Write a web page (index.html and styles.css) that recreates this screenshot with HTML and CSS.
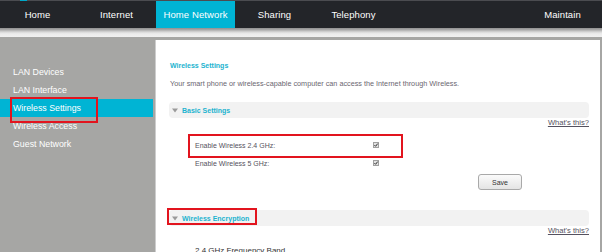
FILE: index.html
```html
<!DOCTYPE html>
<html>
<head>
<meta charset="utf-8">
<link rel="stylesheet" href="styles.css">
</head>
<body>
<div class="topline"><span class="logo-tip"></span></div>
<nav class="nav">
  <a class="tab">Home</a>
  <a class="tab">Internet</a>
  <a class="tab active">Home Network</a>
  <a class="tab">Sharing</a>
  <a class="tab">Telephony</a>
  <a class="tab right">Maintain</a>
</nav>
<div class="strip"></div>
<div class="main">
  <aside class="sidebar">
    <div class="side-item">LAN Devices</div>
    <div class="side-item">LAN Interface</div>
    <div class="side-item active"><span class="mark-side">Wireless Settings</span></div>
    <div class="side-item">Wireless Access</div>
    <div class="side-item">Guest Network</div>
  </aside>
  <section class="panel">
    <h1 class="title">Wireless Settings</h1>
    <p class="desc">Your smart phone or wireless-capable computer can access the Internet through Wireless.</p>
    <div class="bar">
      <svg class="tri" width="6" height="5" viewBox="0 0 6 5"><polygon points="0,0.5 6,0.5 3,4.5" fill="#9a9a9a"/></svg>
      <span class="bar-label">Basic Settings</span>
    </div>
    <div class="whats"><a>What's this?</a></div>
    <div class="row marked">
      <span class="row-label">Enable Wireless 2.4 GHz:</span>
      <svg class="chk" width="6" height="6" viewBox="0 0 6 6"><rect x="0.5" y="0.5" width="5" height="5" fill="#e2e2e2" stroke="#a0a0a0"/><path d="M1.4 3.1 L2.6 4.3 L4.7 1.6" fill="none" stroke="#333" stroke-width="1"/></svg>
    </div>
    <div class="row">
      <span class="row-label">Enable Wireless 5 GHz:</span>
      <svg class="chk" width="6" height="6" viewBox="0 0 6 6"><rect x="0.5" y="0.5" width="5" height="5" fill="#e2e2e2" stroke="#a0a0a0"/><path d="M1.4 3.1 L2.6 4.3 L4.7 1.6" fill="none" stroke="#333" stroke-width="1"/></svg>
    </div>
    <div class="btn-row"><button class="save">Save</button></div>
    <div class="bar bar-enc">
      <span class="mark-enc"></span>
      <svg class="tri" width="6" height="5" viewBox="0 0 6 5"><polygon points="0,0.5 6,0.5 3,4.5" fill="#9a9a9a"/></svg>
      <span class="bar-label">Wireless Encryption</span>
    </div>
    <div class="whats"><a>What's this?</a></div>
    <div class="band">2.4 GHz Frequency Band</div>
  </section>
</div>
</body>
</html>
```
FILE: styles.css
```css
* { box-sizing: border-box; }
html, body { margin: 0; padding: 0; }
body {
  width: 602px;
  height: 252px;
  overflow: hidden;
  background: #a6a6a4;
  font-family: "Liberation Sans", Arial, sans-serif;
}
.topline {
  height: 1px;
  background: #4b4c50;
  display: flex;
}
.logo-tip {
  margin-left: 20px;
  width: 7px;
  height: 1px;
  background: #00a8c8;
}
.nav {
  height: 27px;
  background: #232529;
  display: flex;
  margin-left: -2px;
}
.tab {
  width: 79px;
  display: flex;
  align-items: center;
  justify-content: center;
  color: #fff;
  font-size: 9.5px;
  letter-spacing: 0.1px;
  padding-bottom: 1px;
}
.tab.active { background: #00b4d4; }
.tab.right { margin-left: auto; }
.strip {
  height: 9px;
  background: linear-gradient(#8f8f8f 0%, #a9a9a9 20%, #d9d9d9 45%, #ececec 65%, #f0f0f0 100%);
}
.main {
  display: flex;
  height: 215px;
}
.sidebar {
  width: 155px;
  padding-top: 26px;
  flex: none;
}
.side-item {
  height: 18px;
  line-height: 18px;
  padding-left: 13px;
  color: #fff;
  font-size: 8.8px;
  margin-right: 2px;
}
.side-item.active { background: #00b4d4; }
.mark-side {
  position: relative;
  display: inline-block;
  height: 18px;
  vertical-align: top;
}
.mark-side::after {
  content: "";
  position: absolute;
  left: -3px;
  top: -2px;
  width: 84px;
  height: 22px;
  border: 2px solid #e2141e;
}
.panel {
  flex: 1;
  margin-top: 3px;
  margin-right: 2px;
  background: #fff;
  border-left: 1px solid #cdcdcd;
  padding: 21px 11px 0 13px;
}
.title {
  margin: 0;
  padding-left: 1px;
  font-size: 7px;
  line-height: 10px;
  font-weight: bold;
  color: #1cb3cf;
}
.desc {
  margin: 8px 0 0;
  padding-left: 1px;
  font-size: 7.25px;
  line-height: 10px;
  color: #6a6670;
}
.bar {
  margin-top: 13px;
  height: 16px;
  background: #f2f2f2;
  border-radius: 4px;
  display: flex;
  align-items: center;
  padding-left: 3px;
  position: relative;
}
.tri { margin-right: 4px; }
.bar-label {
  font-size: 7px;
  font-weight: bold;
  color: #1cb3cf;
}
.whats {
  text-align: right;
  line-height: 9px;
  font-size: 7.6px;
  padding-right: 0;
}
.whats a {
  color: #555260;
  text-decoration: underline;
}
.row {
  margin-left: 26px;
  height: 18px;
  display: flex;
  align-items: center;
  position: relative;
}
.row.marked { margin-top: 9px; }
.row-label {
  width: 178px;
  font-size: 7px;
  color: #555260;
}
.marked::after {
  content: "";
  position: absolute;
  left: -7px;
  top: -2px;
  width: 211px;
  height: 20px;
  border: 2px solid #e2141e;
}
.btn-row {
  margin-top: 2px;
  padding-left: 309px;
  display: flex;
}
.save {
  width: 44px;
  height: 16px;
  padding: 0;
  border: 1px solid #a9a9a9;
  border-radius: 3px;
  background: linear-gradient(#fbfbfb, #e4e4e4);
  font-family: "Liberation Sans", Arial, sans-serif;
  font-size: 7px;
  color: #333;
}
.bar-enc { margin-top: 20px; }
.mark-enc {
  position: absolute;
  left: -2px;
  top: -2px;
  width: 90px;
  height: 17px;
  border: 2px solid #e2141e;
}
.band {
  margin-top: 11px;
  margin-left: 26px;
  font-size: 8px;
  line-height: 10px;
  color: #333;
}
```
